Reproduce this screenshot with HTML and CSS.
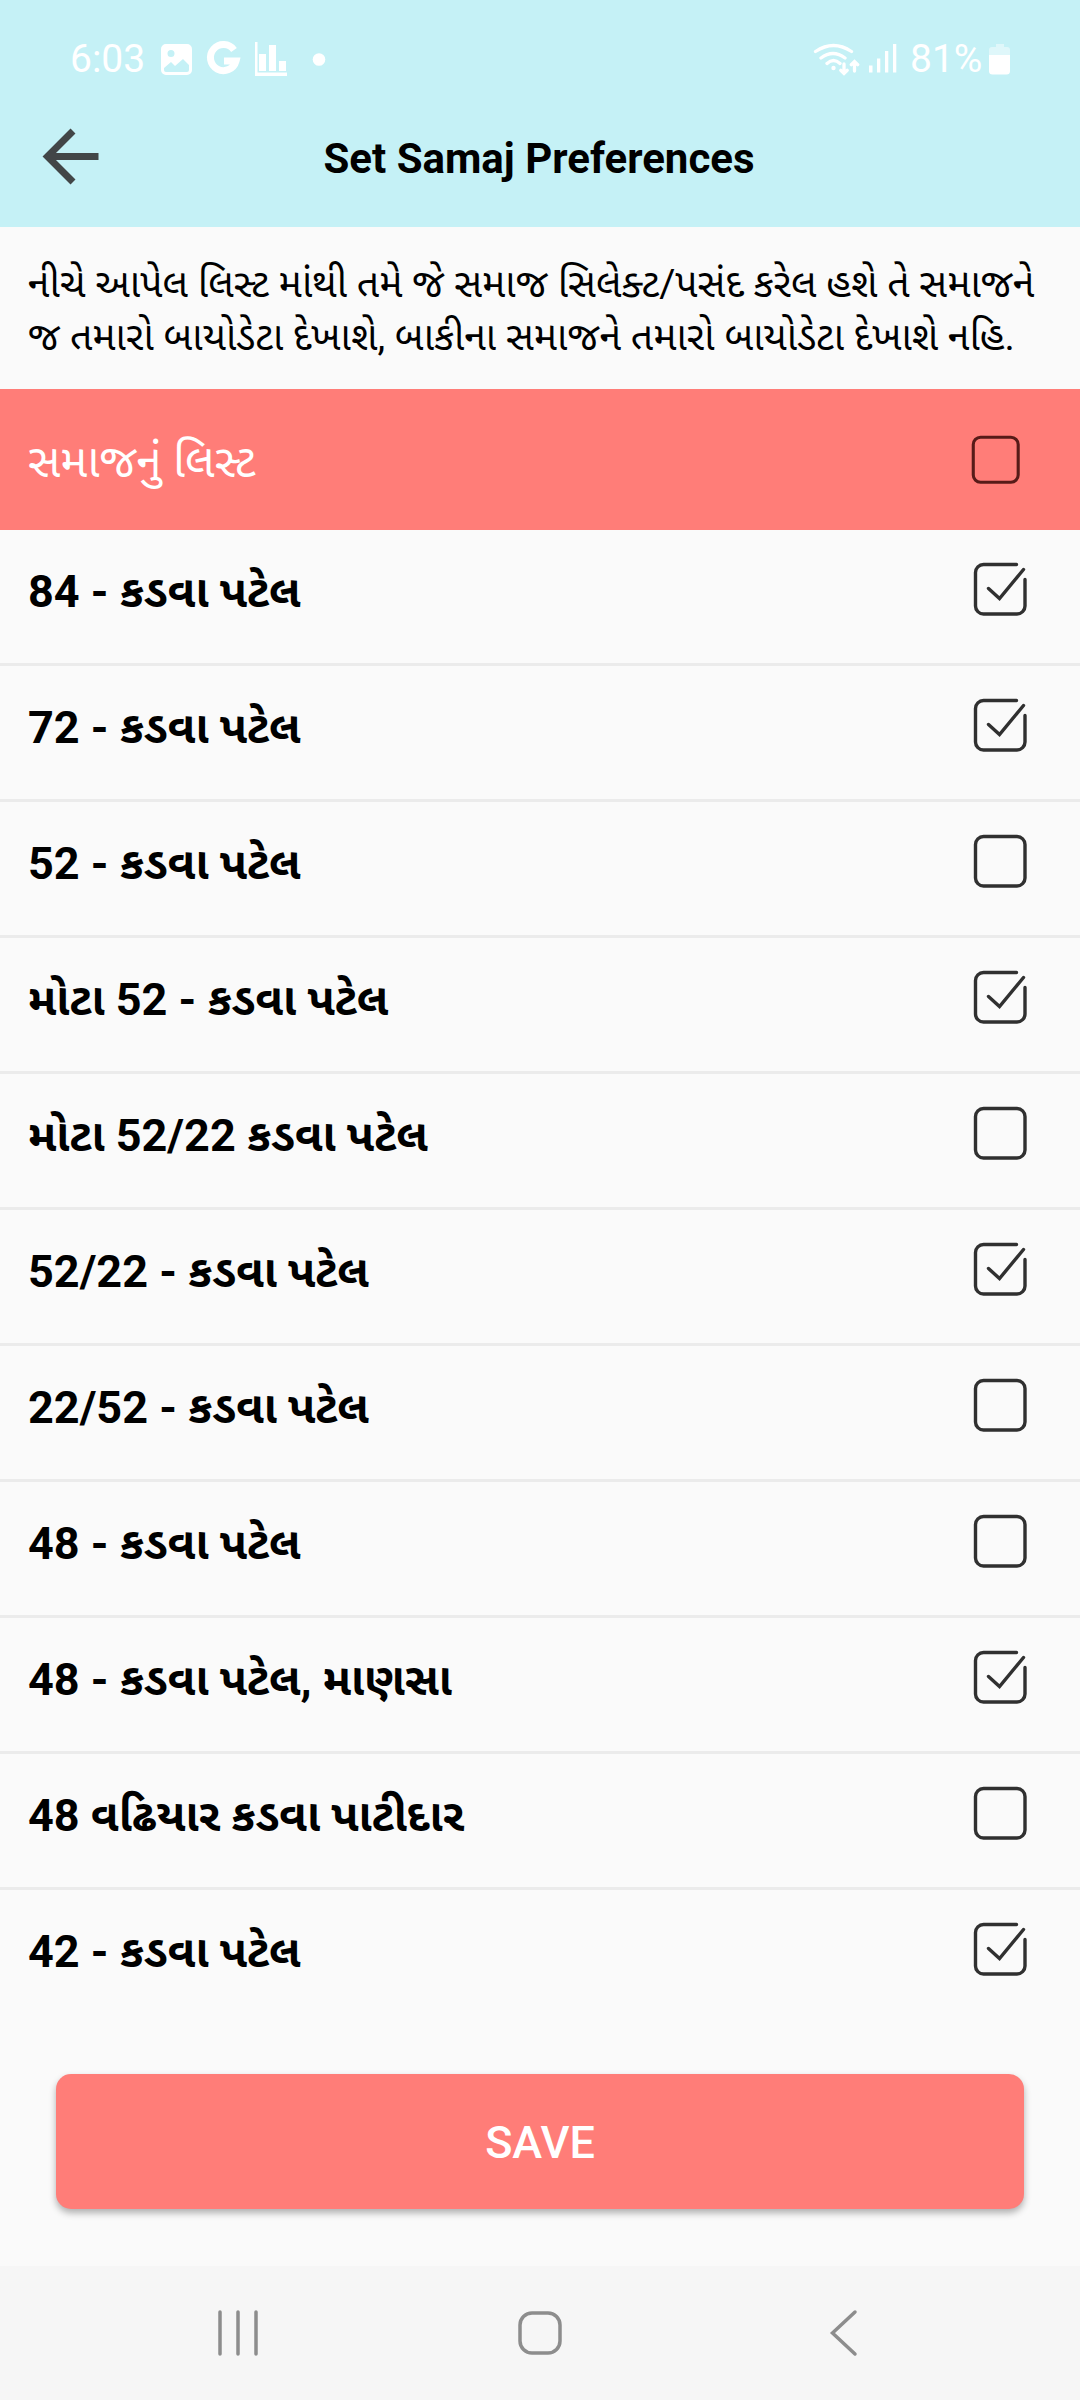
FILE: index.html
```html
<!DOCTYPE html>
<html lang="gu">
<head>
<meta charset="utf-8">
<title>Set Samaj Preferences</title>
<link rel="stylesheet" href="styles.css">
</head>
<body>
<svg class="defs" aria-hidden="true">
  <symbol id="box" viewBox="0 0 54 54"><rect x="2.500" y="2.500" width="49.500" height="49.500" rx="8"/></symbol>
  <symbol id="checked" viewBox="0 0 54 54"><path d="M43.500 2.500H10.500a8 8 0 0 0-8 8V44a8 8 0 0 0 8 8H44a8 8 0 0 0 8-8V17.500M15.500 26.500l11 10L50.500 7.500"/></symbol>
</svg>
<header class="top">
  <div class="status">
    <span class="time">6:03</span>
    <svg class="notifications" width="170" height="40" viewBox="0 0 170 40">
      <path fill-rule="evenodd" d="M6 4h21a5 5 0 0 1 5 5v21a5 5 0 0 1-5 5H6a5 5 0 0 1-5-5V9a5 5 0 0 1 5-5zM11 10a3.500 3.500 0 1 0 0 7 3.500 3.500 0 0 0 0-7zM4 28v2q0 2 2 2h21q2 0 2-2v-5l-6-6-8 7-4-4z"/>
      <path class="google" d="M74 10A13 13 0 1 0 76 21H64"/>
      <path d="M95 2h2.500v30.500H127V36H95zM99 14h7v17h-7zM109 5h7v26h-7zM119 21h7v10h-7z"/>
      <circle cx="159" cy="19.500" r="6.300"/>
    </svg>
    <svg class="signal" width="90" height="40" viewBox="0 0 90 40">
      <path class="waves" d="M4.500 11.500q18-12 36 0M10 18q12-9 24 0M16 23.500q6.500-6 13 0M33 24v9.500m-3.200-3.200 3.200 3.200 3.200-3.200M43.500 31v-9.500m-3.200 3.200 3.200-3.200 3.200 3.200"/>
      <circle cx="22.500" cy="28" r="2.200"/>
      <path d="M58 25.500h3.500v7H58zM66 18.500h3.300v14H66zM74 11h3.300v21.500H74zM82 4h3.300v28.500H82z"/>
    </svg>
    <span class="percent">81%</span>
    <svg class="battery" width="22" height="32" viewBox="0 0 22 32">
      <path opacity=".45" d="M7 0h8v3h3q3 0 3 3v5H0V6q0-3 3-3h4z"/>
      <path d="M0 11h21v16q0 3.500-3.500 3.500h-14Q0 30.500 0 27z"/>
    </svg>
  </div>
  <div class="toolbar">
    <svg class="back" width="60" height="60" viewBox="0 0 60 60"><path d="M58.500 29.500H7M33 4 7.500 29.500 33 55"/></svg>
    <h1>Set Samaj Preferences</h1>
  </div>
</header>
<main>
  <p class="note">નીચે આપેલ લિસ્ટ માંથી તમે જે સમાજ સિલેક્ટ/પસંદ કરેલ હશે તે સમાજને<br>જ તમારો બાયોડેટા દેખાશે, બાકીના સમાજને તમારો બાયોડેટા દેખાશે નહિ.</p>
  <div class="banner"><span>સમાજનું લિસ્ટ</span><svg class="check"><use href="#box"/></svg></div>
  <ul class="list">
    <li><span>84 - કડવા પટેલ</span><svg class="check"><use href="#checked"/></svg></li>
    <li><span>72 - કડવા પટેલ</span><svg class="check"><use href="#checked"/></svg></li>
    <li><span>52 - કડવા પટેલ</span><svg class="check"><use href="#box"/></svg></li>
    <li><span>મોટા 52 - કડવા પટેલ</span><svg class="check"><use href="#checked"/></svg></li>
    <li><span>મોટા 52/22 કડવા પટેલ</span><svg class="check"><use href="#box"/></svg></li>
    <li><span>52/22 - કડવા પટેલ</span><svg class="check"><use href="#checked"/></svg></li>
    <li><span>22/52 - કડવા પટેલ</span><svg class="check"><use href="#box"/></svg></li>
    <li><span>48 - કડવા પટેલ</span><svg class="check"><use href="#box"/></svg></li>
    <li><span>48 - કડવા પટેલ, માણસા</span><svg class="check"><use href="#checked"/></svg></li>
    <li><span>48 વઢિયાર કડવા પાટીદાર</span><svg class="check"><use href="#box"/></svg></li>
    <li><span>42 - કડવા પટેલ</span><svg class="check"><use href="#checked"/></svg></li>
  </ul>
  <button class="save" type="button">SAVE</button>
</main>
<nav class="navbar">
  <svg width="48" height="48" viewBox="0 0 48 48"><path d="M7 3v42M25 3v42M43 3v42"/></svg>
  <svg width="48" height="48" viewBox="0 0 48 48"><rect x="4" y="4" width="40" height="40" rx="12"/></svg>
  <svg width="48" height="48" viewBox="0 0 48 48"><path d="M36 3 13.500 24 36 45"/></svg>
</nav>
</body>
</html>
```
FILE: styles.css
```css
* { box-sizing: border-box; }

body {
  margin: 0;
  width: 1080px;
  height: 2400px;
  display: flex;
  flex-direction: column;
  background: #fafafa;
  color: #000;
  font-family: Roboto, "Noto Sans Gujarati", "Noto Sans", sans-serif;
  overflow: hidden;
}

.defs { display: none; }

.top {
  height: 227px;
  flex: none;
  background: #c5f1f6;
}

.status {
  height: 87px;
  padding: 30px 69px 0 70px;
  display: flex;
  align-items: flex-start;
  color: #fff;
  fill: #fff;
  font-size: 39px;
  line-height: 58px;
}

.time { width: 90px; }
.notifications { margin-top: 10px; }
.google { fill: none; stroke: #fff; stroke-width: 7; }
.signal { margin: 10px 9px 0 auto; }
.waves { fill: none; stroke: #fff; stroke-width: 3.3; stroke-linecap: round; }
.percent { width: 79px; }
.battery { margin-top: 14px; }

.toolbar {
  height: 140px;
  padding: 0 42px 0 40px;
  display: grid;
  grid-template-columns: 60px 1fr 60px;
  align-items: center;
}

.back { fill: none; stroke: #424647; stroke-width: 7; }

h1 {
  margin: 4px 0 0;
  font-size: 42px;
  line-height: 50px;
  font-weight: 700;
  text-align: center;
  white-space: nowrap;
}

main {
  flex: 1;
  display: flex;
  flex-direction: column;
}

.note {
  margin: 0;
  height: 162px;
  padding: 31px 0 0 28px;
  font-size: 39.2px;
  line-height: 53px;
  white-space: nowrap;
}

.banner {
  height: 141px;
  padding: 0 60px 0 28px;
  display: flex;
  justify-content: space-between;
  align-items: center;
  background: #ff7d78;
  color: #fff;
  font-size: 45.5px;
  line-height: 60px;
}

.banner span { padding-top: 4px; }
.list span { padding-top: 6px; }

.check {
  width: 54px;
  height: 54px;
  fill: none;
  stroke: #303030;
  stroke-width: 3.4;
  stroke-linecap: round;
}

.banner .check { width: 49px; height: 49px; stroke: #571b18; }

.list {
  margin: 0;
  padding: 0;
  height: 1496px;
  list-style: none;
}

.list li {
  height: 136px;
  padding: 0 53px 15px 28px;
  border-bottom: 3px solid #ebebeb;
  display: flex;
  justify-content: space-between;
  align-items: center;
  font-size: 45px;
  line-height: 60px;
  font-weight: 700;
}

.list li:last-child { border-bottom-color: transparent; }

.save {
  margin: 48px 56px 0;
  height: 135px;
  padding: 2px 0 0;
  border: 0;
  border-radius: 15px;
  background: #ff7d78;
  box-shadow: 0 4px 7px rgba(0, 0, 0, .3);
  color: #fff;
  font: 500 45px/133px Roboto, sans-serif;
}

.navbar {
  flex: none;
  height: 134px;
  padding: 0 213px;
  display: flex;
  justify-content: space-between;
  align-items: center;
  background: #f6f6f6;
}

.navbar svg { fill: none; stroke: #8d8d8d; stroke-width: 3.5; stroke-linecap: round; }
```
